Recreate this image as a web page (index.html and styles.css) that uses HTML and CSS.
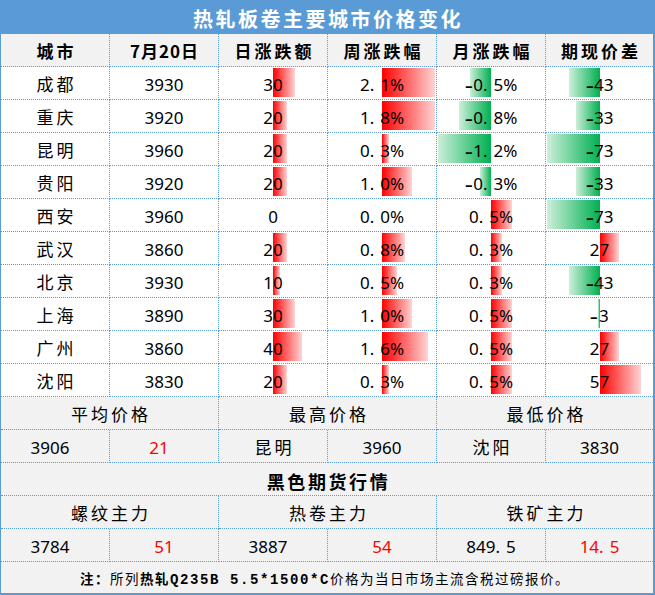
FILE: index.html
```html
<!DOCTYPE html>
<html lang="zh-CN">
<head>
<meta charset="utf-8">
<title>热轧板卷主要城市价格变化</title>
<link rel="stylesheet" href="styles.css">
</head>
<body>
<div class="sheet">
  <div class="title">热轧板卷主要城市价格变化</div>

  <div class="c hd">城市</div>
  <div class="c hd date">7月20日</div>
  <div class="c hd">日涨跌额</div>
  <div class="c hd">周涨跌幅</div>
  <div class="c hd">月涨跌幅</div>
  <div class="c hd last">期现价差</div>

  <div class="c city">成都</div>
  <div class="c num">3930</div>
  <div class="c num bc"><i class="bar pos" style="width:22px"></i><span class="v">30</span></div>
  <div class="c num bc"><i class="bar pos" style="width:53px"></i><span class="v">2<span class="dp">.</span>1%</span></div>
  <div class="c num bc"><i class="bar neg" style="width:21px"></i><span class="v"><span class="mi">-</span>0<span class="dp">.</span>5%</span></div>
  <div class="c num bc last"><i class="bar neg" style="width:31px"></i><span class="v"><span class="mi">-</span>43</span></div>

  <div class="c city">重庆</div>
  <div class="c num">3920</div>
  <div class="c num bc"><i class="bar pos" style="width:14px"></i><span class="v">20</span></div>
  <div class="c num bc"><i class="bar pos" style="width:53px"></i><span class="v">1<span class="dp">.</span>8%</span></div>
  <div class="c num bc"><i class="bar neg" style="width:32px"></i><span class="v"><span class="mi">-</span>0<span class="dp">.</span>8%</span></div>
  <div class="c num bc last"><i class="bar neg" style="width:24px"></i><span class="v"><span class="mi">-</span>33</span></div>

  <div class="c city">昆明</div>
  <div class="c num">3960</div>
  <div class="c num bc"><i class="bar pos" style="width:14px"></i><span class="v">20</span></div>
  <div class="c num bc"><i class="bar pos" style="width:7px"></i><span class="v">0<span class="dp">.</span>3%</span></div>
  <div class="c num bc"><i class="bar neg" style="width:53px"></i><span class="v"><span class="mi">-</span>1<span class="dp">.</span>2%</span></div>
  <div class="c num bc last"><i class="bar neg" style="width:53px"></i><span class="v"><span class="mi">-</span>73</span></div>

  <div class="c city">贵阳</div>
  <div class="c num">3920</div>
  <div class="c num bc"><i class="bar pos" style="width:14px"></i><span class="v">20</span></div>
  <div class="c num bc"><i class="bar pos" style="width:30px"></i><span class="v">1<span class="dp">.</span>0%</span></div>
  <div class="c num bc"><i class="bar neg" style="width:11px"></i><span class="v"><span class="mi">-</span>0<span class="dp">.</span>3%</span></div>
  <div class="c num bc last"><i class="bar neg" style="width:24px"></i><span class="v"><span class="mi">-</span>33</span></div>

  <div class="c city">西安</div>
  <div class="c num">3960</div>
  <div class="c num bc"><span class="v">0</span></div>
  <div class="c num bc"><span class="v">0<span class="dp">.</span>0%</span></div>
  <div class="c num bc"><i class="bar pos" style="width:21px"></i><span class="v">0<span class="dp">.</span>5%</span></div>
  <div class="c num bc last"><i class="bar neg" style="width:53px"></i><span class="v"><span class="mi">-</span>73</span></div>

  <div class="c city">武汉</div>
  <div class="c num">3860</div>
  <div class="c num bc"><i class="bar pos" style="width:14px"></i><span class="v">20</span></div>
  <div class="c num bc"><i class="bar pos" style="width:23px"></i><span class="v">0<span class="dp">.</span>8%</span></div>
  <div class="c num bc"><i class="bar pos" style="width:11px"></i><span class="v">0<span class="dp">.</span>3%</span></div>
  <div class="c num bc last"><i class="bar pos" style="width:19px"></i><span class="v">27</span></div>

  <div class="c city">北京</div>
  <div class="c num">3930</div>
  <div class="c num bc"><i class="bar pos" style="width:7px"></i><span class="v">10</span></div>
  <div class="c num bc"><i class="bar pos" style="width:15px"></i><span class="v">0<span class="dp">.</span>5%</span></div>
  <div class="c num bc"><i class="bar pos" style="width:11px"></i><span class="v">0<span class="dp">.</span>3%</span></div>
  <div class="c num bc last"><i class="bar neg" style="width:31px"></i><span class="v"><span class="mi">-</span>43</span></div>

  <div class="c city">上海</div>
  <div class="c num">3890</div>
  <div class="c num bc"><i class="bar pos" style="width:22px"></i><span class="v">30</span></div>
  <div class="c num bc"><i class="bar pos" style="width:30px"></i><span class="v">1<span class="dp">.</span>0%</span></div>
  <div class="c num bc"><i class="bar pos" style="width:21px"></i><span class="v">0<span class="dp">.</span>5%</span></div>
  <div class="c num bc last"><i class="bar neg" style="width:2px"></i><span class="v"><span class="mi">-</span>3</span></div>

  <div class="c city">广州</div>
  <div class="c num">3860</div>
  <div class="c num bc"><i class="bar pos" style="width:29px"></i><span class="v">40</span></div>
  <div class="c num bc"><i class="bar pos" style="width:46px"></i><span class="v">1<span class="dp">.</span>6%</span></div>
  <div class="c num bc"><i class="bar pos" style="width:21px"></i><span class="v">0<span class="dp">.</span>5%</span></div>
  <div class="c num bc last"><i class="bar pos" style="width:19px"></i><span class="v">27</span></div>

  <div class="c city">沈阳</div>
  <div class="c num">3830</div>
  <div class="c num bc"><i class="bar pos" style="width:14px"></i><span class="v">20</span></div>
  <div class="c num bc"><i class="bar pos" style="width:7px"></i><span class="v">0<span class="dp">.</span>3%</span></div>
  <div class="c num bc"><i class="bar pos" style="width:21px"></i><span class="v">0<span class="dp">.</span>5%</span></div>
  <div class="c num bc last"><i class="bar pos" style="width:41px"></i><span class="v">57</span></div>

  <div class="c g lbl s2">平均价格</div>
  <div class="c g lbl s2">最高价格</div>
  <div class="c g lbl s2 last">最低价格</div>

  <div class="c g num sh">3906</div>
  <div class="c g num red sh">21</div>
  <div class="c g city">昆明</div>
  <div class="c g num">3960</div>
  <div class="c g city">沈阳</div>
  <div class="c g num last">3830</div>

  <div class="c g sec last">黑色期货行情</div>

  <div class="c g lbl s2">螺纹主力</div>
  <div class="c g lbl s2">热卷主力</div>
  <div class="c g lbl s2 last">铁矿主力</div>

  <div class="c g num sh">3784</div>
  <div class="c g num red">51</div>
  <div class="c g num sh">3887</div>
  <div class="c g num red">54</div>
  <div class="c g num">849<span class="dp">.</span>5</div>
  <div class="c g num red last">14<span class="dp">.</span>5</div>

  <div class="note"><b>注：</b>所列<b>热轧<span class="mono">Q235B 5.5*1500*C</span></b>价格为当日市场主流含税过磅报价。</div>
</div>
</body>
</html>
```

FILE: styles.css
```css
* { box-sizing: border-box; }
html, body { margin: 0; padding: 0; background: #ffffff; }

.sheet {
  width: 655px;
  height: 595px;
  border-left: 1px solid #5b9bd5;
  border-right: 2px solid #5b9bd5;
  border-bottom: 2px solid #5b9bd5;
  display: grid;
  grid-template-columns: 109px 109px 109px 109px 109px 107px;
  grid-template-rows: 34px repeat(16, 33px) 31px;
  font-family: "Noto Sans CJK SC", sans-serif;
  color: #000;
}

.title {
  grid-column: 1 / -1;
  background: #5b9bd5;
  color: #ffffff;
  font-weight: bold;
  font-size: 20px;
  letter-spacing: 2.5px;
  display: flex;
  align-items: center;
  justify-content: center;
  padding-top: 2px;
  padding-left: 2px;
}

.c {
  border-right: 1px dotted #5b9bd5;
  border-bottom: 1px dotted #5b9bd5;
  display: flex;
  align-items: center;
  justify-content: center;
  background: #ffffff;
  white-space: nowrap;
  overflow: hidden;
}
.c.last { border-right: none; }

.hd {
  background: #f2f2f2;
  font-weight: bold;
  font-size: 17px;
  letter-spacing: 3px;
  padding-left: 3px;
}
.hd.date { letter-spacing: 1px; padding-left: 1px; }

.city {
  font-size: 17px;
  letter-spacing: 3px;
  padding-left: 3px;
}

.num {
  font-family: "Noto Sans", "Noto Sans CJK SC", sans-serif;
  font-size: 17px;
  padding-top: 2px;
}

.dp { margin-right: 6px; }

.mi {
  display: inline-block;
  transform: scale(1.5, 1.3);
  margin: 0 2px 0 1px;
}

.bc { position: relative; }
.v { position: relative; }

.bar {
  position: absolute;
  top: 1px;
  bottom: 2px;
  display: block;
}
.bar.pos {
  left: 50%;
  background: linear-gradient(to right, #ff0000, #ffd4d4);
}
.bar.neg {
  right: 50%;
  background: linear-gradient(to left, #00b050, #cdefda);
}

.g { background: #f2f2f2; }
.s2 { grid-column: span 2; }
.lbl {
  font-size: 17px;
  letter-spacing: 3px;
  padding-left: 3px;
}
.sec {
  grid-column: 1 / -1;
  font-weight: bold;
  font-size: 18px;
  letter-spacing: 2.6px;
  padding-left: 3px;
  padding-top: 4px;
}
.sh { padding-right: 10px; }
.red { color: #ff0000; }

.note {
  grid-column: 1 / -1;
  background: #f2f2f2;
  display: flex;
  align-items: center;
  justify-content: center;
  font-size: 13.5px;
  letter-spacing: 1.5px;
  white-space: nowrap;
  padding-right: 4px;
}
.note b { font-weight: bold; }
.mono {
  font-family: "Liberation Mono", monospace;
  font-size: 14px;
  letter-spacing: 1.6px;
}
```
